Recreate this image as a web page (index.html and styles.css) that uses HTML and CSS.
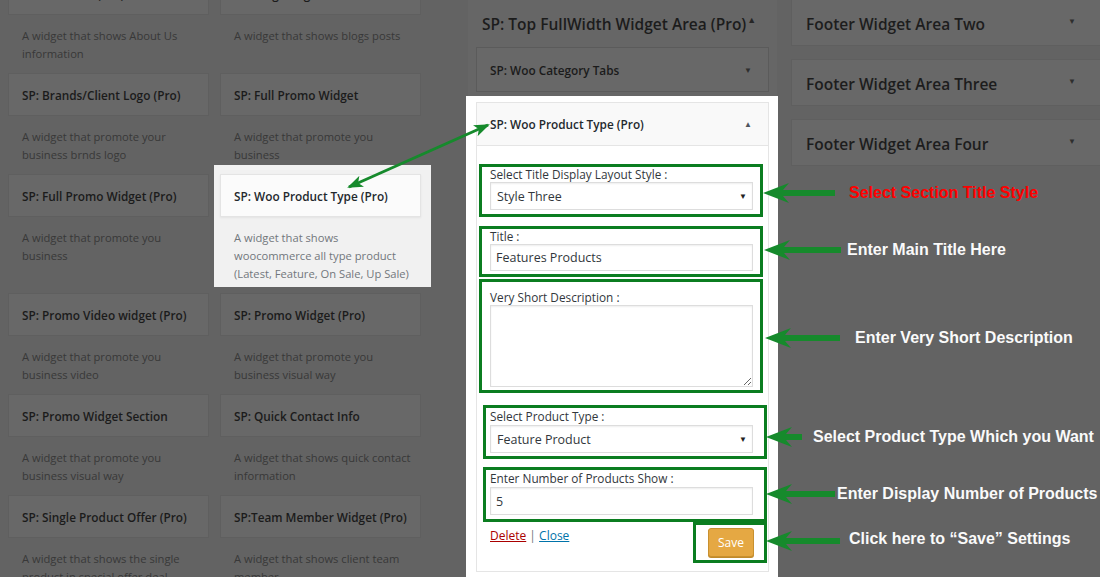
FILE: index.html
```html
<!DOCTYPE html>
<html lang="en">
<head>
<meta charset="utf-8">
<title>Widgets</title>
<link rel="stylesheet" href="styles.css">
</head>
<body>
<div class="screen">
  <section class="available">
    <div class="widget-grid">
      <div class="widget"><div class="w-top"><h3 class="w-title">SP: About Us (Pro)</h3></div><p class="w-desc">A widget that shows About Us<br>information</p></div>
      <div class="widget"><div class="w-top"><h3 class="w-title">SP: Blog Widget</h3></div><p class="w-desc">A widget that shows blogs posts</p></div>
      <div class="widget"><div class="w-top"><h3 class="w-title">SP: Brands/Client Logo (Pro)</h3></div><p class="w-desc">A widget that promote your<br>business brnds logo</p></div>
      <div class="widget"><div class="w-top"><h3 class="w-title">SP: Full Promo Widget</h3></div><p class="w-desc">A widget that promote you<br>business</p></div>
      <div class="widget"><div class="w-top"><h3 class="w-title">SP: Full Promo Widget (Pro)</h3></div><p class="w-desc">A widget that promote you<br>business</p></div>
      <div class="widget is-active"><div class="w-top"><h3 class="w-title">SP: Woo Product Type (Pro)</h3></div><p class="w-desc">A widget that shows<br>woocommerce all type product<br>(Latest, Feature, On Sale, Up Sale)</p></div>
      <div class="widget"><div class="w-top"><h3 class="w-title">SP: Promo Video widget (Pro)</h3></div><p class="w-desc">A widget that promote you<br>business video</p></div>
      <div class="widget"><div class="w-top"><h3 class="w-title">SP: Promo Widget (Pro)</h3></div><p class="w-desc">A widget that promote you<br>business visual way</p></div>
      <div class="widget"><div class="w-top"><h3 class="w-title">SP: Promo Widget Section</h3></div><p class="w-desc">A widget that promote you<br>business visual way</p></div>
      <div class="widget"><div class="w-top"><h3 class="w-title">SP: Quick Contact Info</h3></div><p class="w-desc">A widget that shows quick contact<br>information</p></div>
      <div class="widget"><div class="w-top"><h3 class="w-title">SP: Single Product Offer (Pro)</h3></div><p class="w-desc">A widget that shows the single<br>product in special offer deal</p></div>
      <div class="widget"><div class="w-top"><h3 class="w-title">SP:Team Member Widget (Pro)</h3></div><p class="w-desc">A widget that shows client team<br>member</p></div>
    </div>
  </section>

  <section class="sidebar">
    <div class="sidebar-dim">
      <h2 class="sidebar-name"><span>SP: Top FullWidth Widget Area (Pro)</span><span class="toggle">▲</span></h2>
      <div class="dim-card"><h3 class="w-title">SP: Woo Category Tabs</h3><span class="caret">▼</span></div>
    </div>
    <div class="panel">
      <div class="wf">
        <div class="wf-top"><h3 class="wf-title">SP: Woo Product Type (Pro)</h3><span class="caret dark">▲</span></div>
        <div class="wf-inside">
          <div class="field f1">
            <label>Select Title Display Layout Style :</label>
            <div class="select-wrap"><select class="input"><option>Style Three</option></select></div>
          </div>
          <div class="field f2">
            <label>Title :</label>
            <input class="input" type="text" value="Features Products">
          </div>
          <div class="field f3">
            <label>Very Short Description :</label>
            <textarea class="input area-input"></textarea>
          </div>
          <div class="field f4">
            <label>Select Product Type :</label>
            <div class="select-wrap"><select class="input"><option>Feature Product</option></select></div>
          </div>
          <div class="field f5">
            <label>Enter Number of Products Show :</label>
            <input class="input" type="text" value="5">
          </div>
          <div class="actions">
            <div class="links"><a class="del" href="#">Delete</a> <span class="sep">|</span> <a class="close" href="#">Close</a></div>
            <div class="save-box"><button class="save" type="button">Save</button></div>
          </div>
        </div>
      </div>
    </div>
  </section>

  <section class="footer-areas">
    <div class="area"><h2>Footer Widget Area Two</h2><span class="caret">▼</span></div>
    <div class="area"><h2>Footer Widget Area Three</h2><span class="caret">▼</span></div>
    <div class="area"><h2>Footer Widget Area Four</h2><span class="caret">▼</span></div>
  </section>
</div>

<div class="callouts">
  <span class="callout red" style="left:849px;top:184px">Select Section Title Style</span>
  <span class="callout" style="left:847px;top:241px">Enter Main Title Here</span>
  <span class="callout" style="left:855px;top:329px">Enter Very Short Description</span>
  <span class="callout" style="left:813px;top:428px">Select Product Type Which you Want</span>
  <span class="callout" style="left:837px;top:485px">Enter Display Number of Products</span>
  <span class="callout" style="left:849px;top:530px">Click here to “Save” Settings</span>
</div>

<svg class="arrows" width="1100" height="577" viewBox="0 0 1100 577" aria-hidden="true">
  <defs>
    <marker id="head" viewBox="0 0 16 12" refX="14" refY="6" markerWidth="16" markerHeight="12" markerUnits="userSpaceOnUse" orient="auto-start-reverse">
      <path d="M0,0 L16,6 L0,12 L4,6 Z" fill="#168a2c"/>
    </marker>
  </defs>
  <line x1="349" y1="187" x2="488" y2="125" stroke="#168a2c" stroke-width="3" marker-start="url(#head)" marker-end="url(#head)"/>
  <g fill="#168a2c">
    <polygon points="763,193 789,183 783,190 835,190 835,196 783,196 789,203"/>
    <polygon points="764,250 790,240 784,247 841,247 841,253 784,253 790,260"/>
    <polygon points="765,338 791,328 785,335 840,335 840,341 785,341 791,348"/>
    <polygon points="766,437 792,427 786,434 802,434 802,440 786,440 792,447"/>
    <polygon points="766,494 792,484 786,491 835,491 835,497 786,497 792,504"/>
    <polygon points="766,541 792,531 786,538 840,538 840,544 786,544 792,551"/>
  </g>
</svg>
</body>
</html>
```

FILE: styles.css
```css
* { box-sizing: border-box; }
html, body { margin: 0; padding: 0; }
body {
  width: 1100px;
  height: 577px;
  overflow: hidden;
  position: relative;
  background: #636363;
  font-family: "Open Sans", "Noto Sans", sans-serif;
  color: #1c1c1c;
}

.screen {
  display: flex;
  align-items: flex-start;
  height: 577px;
  padding-left: 8px;
}

/* ---------- available widgets ---------- */
.available { width: 413px; flex: none; }
.widget-grid {
  display: grid;
  grid-template-columns: 201px 201px;
  column-gap: 11px;
  margin-top: -28px;
}
.widget { position: relative; z-index: 0; }
.w-top {
  height: 43px;
  background: #686868;
  border: 1px solid #5f5f5f;
  display: flex;
  align-items: center;
  padding-left: 13px;
}
.w-title {
  margin: 0;
  font-size: 11.8px;
  font-weight: 600;
  color: #1b1b1b;
  white-space: nowrap;
}
.w-desc {
  margin: 0;
  padding: 12px 6px 10px 14px;
  font-size: 11.2px;
  line-height: 18px;
  color: #383838;
  white-space: nowrap;
}
.widget.is-active::before {
  content: "";
  position: absolute;
  inset: -9px -10px 6px -6px;
  background: #f1f1f1;
  z-index: -1;
}
.widget.is-active .w-top {
  background: #fbfbfb;
  border-color: #e4e4e4;
  box-shadow: 0 1px 2px rgba(0, 0, 0, 0.06);
}
.widget.is-active .w-title { color: #23282d; }
.widget.is-active .w-desc { color: #72777c; }

/* ---------- sidebar (middle) ---------- */
.sidebar {
  width: 312px;
  margin-left: 45px;
  flex: none;
  align-self: stretch;
  display: flex;
  flex-direction: column;
}
.sidebar-dim {
  margin: 0 1px 0 2px;
  background: #666666;
  padding-bottom: 4px;
}
.sidebar-name {
  display: flex;
  align-items: flex-start;
  margin: 0;
  height: 47px;
  padding: 13px 0 0 14px;
  font-size: 15.5px;
  line-height: 22px;
  font-weight: 600;
  color: #1c1c1c;
  white-space: nowrap;
}
.sidebar-name .toggle {
  font-size: 9px;
  line-height: 10px;
  padding-top: 2px;
  margin-left: 1px;
  color: #262626;
}
.dim-card {
  margin: 0 8px;
  height: 45px;
  border: 1px solid #5b5b5b;
  background: #686868;
  display: flex;
  align-items: center;
  justify-content: space-between;
  padding: 0 16px 0 13px;
}
.caret {
  font-size: 8px;
  line-height: 10px;
  color: #2e2e2e;
}
.caret.dark { color: #50575e; }

.panel {
  flex: 1;
  background: #ffffff;
  padding: 6px 9px 6px 10px;
}
.wf {
  border: 1px solid #e5e5e5;
  background: #fff;
}
.wf-top {
  height: 43px;
  background: #f9f9f9;
  border-bottom: 1px solid #e5e5e5;
  display: flex;
  align-items: center;
  justify-content: space-between;
  padding: 0 16px 0 13px;
}
.wf-title {
  margin: 0;
  font-size: 11.8px;
  font-weight: 600;
  color: #23282d;
  white-space: nowrap;
}
.wf-inside { padding: 18px 0 8px; }

.field {
  width: 284px;
  border: 3px solid #0b7d20;
}
.field label {
  display: block;
  font-size: 11.8px;
  line-height: 15px;
  color: #32373c;
  white-space: nowrap;
}
.f1 { margin-left: 2px; padding: 0 7px 4px 8px; }
.f2 { margin-left: 2px; margin-top: 9px; padding: 0 7px 3px 8px; }
.f3 { margin-left: 2px; margin-top: 2px; padding: 8px 7px 3px 8px; }
.f4 { margin-left: 6px; margin-top: 12px; padding: 0 11px 3px 4px; }
.f5 { margin-left: 6px; margin-top: 8px; padding: 0 11px 4px 4px; }
.f4 label, .f5 label { line-height: 17px; }

.input {
  display: block;
  width: 100%;
  height: 28px;
  margin: 0;
  border: 1px solid #dddddd;
  border-radius: 0;
  background: #fff;
  box-shadow: inset 0 1px 2px rgba(0, 0, 0, 0.07);
  font-family: "Open Sans", "Noto Sans", sans-serif;
  font-size: 12.5px;
  color: #32373c;
  padding: 0 5px;
  outline: none;
}
.f2 .input { height: 27px; }
.area-input { height: 82px; resize: vertical; padding: 4px 6px; }
select.input {
  -webkit-appearance: none;
  appearance: none;
  padding: 0 24px 0 6px;
}
.select-wrap { position: relative; }
.select-wrap::after {
  content: "▼";
  position: absolute;
  right: 6px;
  top: 9px;
  font-size: 8px;
  line-height: 10px;
  color: #222;
  pointer-events: none;
}

.actions {
  display: flex;
  justify-content: space-between;
  align-items: flex-start;
  margin: 0 1px 0 13px;
}
.links {
  padding-top: 5px;
  font-size: 12px;
  line-height: 18px;
  color: #72777c;
}
.links a { text-decoration: underline; }
.del { color: #a00; }
.close { color: #0073aa; }
.sep { color: #72777c; }
.save-box {
  border: 3px solid #0b7d20;
  padding: 3px 10px 3px 12px;
}
.save {
  display: block;
  width: 46px;
  height: 29px;
  border: 1px solid #c8902f;
  border-radius: 3px;
  background: #e5a843;
  box-shadow: 0 1px 0 #c08a2b;
  color: #fff;
  font-family: "Open Sans", "Noto Sans", sans-serif;
  font-size: 12px;
  padding: 0;
}

/* ---------- footer areas (right) ---------- */
.footer-areas {
  width: 320px;
  margin-left: 13px;
  margin-top: -1px;
  flex: none;
  display: flex;
  flex-direction: column;
  gap: 13px;
}
.area {
  height: 47px;
  background: #686868;
  border: 1px solid #5f5f5f;
  display: flex;
  justify-content: space-between;
  align-items: flex-start;
  padding: 0 34px 0 14px;
}
.area h2 {
  margin: 0;
  padding-top: 13px;
  font-size: 15.5px;
  line-height: 22px;
  font-weight: 600;
  color: #1d1d1d;
  white-space: nowrap;
}
.area .caret { padding-top: 16px; }

/* ---------- annotations ---------- */
.callouts {
  position: absolute;
  inset: 0;
  pointer-events: none;
}
.callout {
  position: absolute;
  font-family: "Liberation Sans", Arial, sans-serif;
  font-weight: 700;
  font-size: 16px;
  line-height: 18px;
  color: #fafafa;
  white-space: nowrap;
}
.callout.red { color: #ff0000; }
.arrows {
  position: absolute;
  left: 0;
  top: 0;
  pointer-events: none;
}
```
